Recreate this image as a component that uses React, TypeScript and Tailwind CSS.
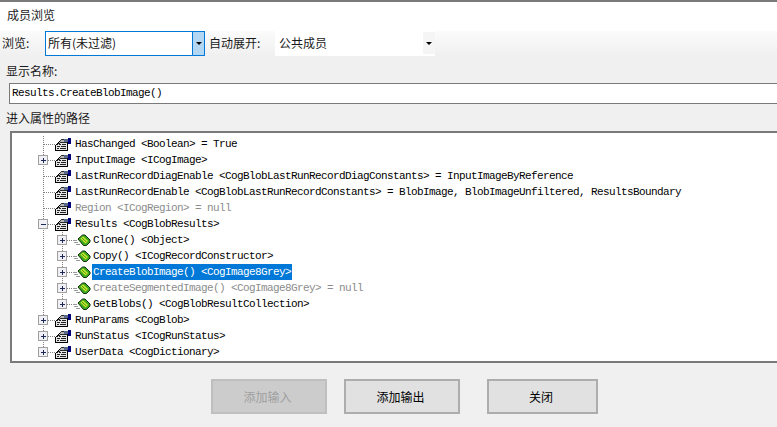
const CJK = "font-['Noto_Sans_CJK_SC','Liberation_Sans',sans-serif]";
const MONO = "font-['Liberation_Mono','Noto_Sans_CJK_SC',monospace]";

function Expander({ x, open }: { x: number; open: boolean }) {
  return (
    <g>
      <rect x={x - 4.5} y={3.5} width={9} height={9} fill="#f0f0f6" stroke="#a0a0a0" />
      <rect x={x - 2} y={8} width={5} height={1} fill="#1c2a5a" />
      {!open && <rect x={x} y={6} width={1} height={5} fill="#1c2a5a" />}
    </g>
  );
}

function Dots({ x, y0, y1 }: { x: number; y0: number; y1: number }) {
  const out = [];
  for (let y = y0; y < y1; y += 2) out.push(<rect key={y} x={x} y={y} width={1} height={1} fill="#808080" />);
  return <>{out}</>;
}

function HDots({ x0, x1 }: { x0: number; x1: number }) {
  const out = [];
  for (let x = x0; x < x1; x += 2) out.push(<rect key={x} x={x} y={8} width={1} height={1} fill="#808080" />);
  return <>{out}</>;
}

function PropIcon({ x }: { x: number }) {
  return (
    <g transform={`translate(${x - 1} 2)`}>
      <path d="M1.5 12.5 V7.5 L5.5 3.5 H13.5 V12.5 Z" fill="#e6e6e6" stroke="#000" />
      <path d="M3 6.5 H4 M5 6.5 H7 M8 6.5 H12 M3 8.5 H6 M7 8.5 H12 M3 10.5 H5 M6 10.5 H12" stroke="#222" fill="none" />
      <path d="M4 5 L8 1 H14 L13 4 H7 L5 6 Z" fill="#b8b8b8" stroke="#000" strokeWidth="0.8" />
      <rect x={10} y={1} width={4} height={3} fill="#5a6a8c" />
      <rect x={14} y={0} width={3} height={6} fill="#00007c" />
    </g>
  );
}

function MethodIcon({ x }: { x: number }) {
  return (
    <g transform={`translate(${x} 2)`}>
      <path d="M0 6.5 H4 M1 8.5 H5 M3 10.5 H7" stroke="#9a9a9a" fill="none" />
      <path
        d="M5 5 L9.5 1 H12 L17 6 V8 L13.5 11.5 H10.5 Z"
        fill="#3fa81e"
        stroke="#0f2f0c"
        shapeRendering="geometricPrecision"
      />
      <path d="M7.5 4.5 L10 2.5 L15 7 L12.5 9.5 Z" fill="#d3ec2e" shapeRendering="geometricPrecision" />
      <path d="M9 4 L13.5 8" stroke="#2f8f18" fill="none" shapeRendering="geometricPrecision" />
    </g>
  );
}

type RowData = {
  level: 0 | 1;
  label: string;
  exp?: "plus" | "minus";
  dim?: boolean;
  sel?: boolean;
  last?: boolean;
  lastChild?: boolean;
};

const rows: RowData[] = [
  { level: 0, label: "HasChanged <Boolean> = True" },
  { level: 0, label: "InputImage <ICogImage>", exp: "plus" },
  { level: 0, label: "LastRunRecordDiagEnable <CogBlobLastRunRecordDiagConstants> = InputImageByReference" },
  { level: 0, label: "LastRunRecordEnable <CogBlobLastRunRecordConstants> = BlobImage, BlobImageUnfiltered, ResultsBoundary" },
  { level: 0, label: "Region <ICogRegion> = null", dim: true },
  { level: 0, label: "Results <CogBlobResults>", exp: "minus" },
  { level: 1, label: "Clone() <Object>", exp: "plus" },
  { level: 1, label: "Copy() <ICogRecordConstructor>", exp: "plus" },
  { level: 1, label: "CreateBlobImage() <CogImage8Grey>", exp: "plus", sel: true },
  { level: 1, label: "CreateSegmentedImage() <CogImage8Grey> = null", exp: "plus", dim: true },
  { level: 1, label: "GetBlobs() <CogBlobResultCollection>", exp: "plus", lastChild: true },
  { level: 0, label: "RunParams <CogBlob>", exp: "plus" },
  { level: 0, label: "RunStatus <ICogRunStatus>", exp: "plus" },
  { level: 0, label: "UserData <CogDictionary>", exp: "plus", last: true },
];

function TreeRow({ r, showChildLine }: { r: RowData; showChildLine: boolean }) {
  const w = r.level === 0 ? 61 : 80;
  const cx0 = 31;
  const cx1 = 50;
  return (
    <div className="flex h-4 items-center">
      <svg width={w} height={16} shapeRendering="crispEdges" className="shrink-0">
        <Dots x={cx0} y0={0} y1={r.last ? 8 : 16} />
        {showChildLine && <Dots x={cx1} y0={0} y1={r.lastChild ? 8 : 16} />}
        {r.level === 0 ? <HDots x0={cx0 + 1} x1={43} /> : <HDots x0={cx1 + 1} x1={61} />}
        {r.exp && <Expander x={r.level === 0 ? cx0 : cx1} open={r.exp === "minus"} />}
        {r.level === 0 ? <PropIcon x={43} /> : <MethodIcon x={61} />}
      </svg>
      <span
        className={`${MONO} whitespace-pre px-px text-[11px] leading-4 tracking-[-0.6px] ${
          r.sel ? "bg-[#0078d7] text-white" : r.dim ? "text-[#8c8c8c]" : "text-black"
        } ${r.level === 0 ? "ml-[1px]" : "ml-0"}`}
      >
        {r.label}
      </span>
    </div>
  );
}

function Btn({ children, disabled, w }: { children: string; disabled?: boolean; w: string }) {
  return (
    <div
      className={`${w} ${CJK} flex h-[35px] items-center justify-center border-2 pr-[3px] text-[12px] ${
        disabled ? "border-[#bfbfbf] bg-[#cccccc] text-[#a0a0a0]" : "border-[#adadad] bg-[#e1e1e1] text-black"
      }`}
    >
      {children}
    </div>
  );
}

export default function App() {
  return (
    <div className={`${CJK} h-[427px] w-[777px] overflow-hidden border-t-2 border-[#7a7a7a] bg-[#f0f0f0] text-[12px] text-[#1a1a1a]`}>
      <div className="flex h-[29px] items-center bg-white pb-[3px] pl-[7px]">成员浏览</div>
      <div className="flex h-[25px] items-center bg-gradient-to-b from-[#fbfbfb] to-[#f0f0f0] pl-[2px]">
        <span className="w-[43px] pb-[2px]">浏览:</span>
        <div className="flex h-[25px] w-[160px] border border-[#0078d7] bg-white">
          <span className="flex-1 pl-[2px] leading-[22px] text-[#111]">所有(未过滤)</span>
          <div className="flex w-[12px] items-center justify-center border-l border-[#0078d7] bg-[#b3d7f3]">
            <div className="h-0 w-0 border-x-[3px] border-t-[3px] border-x-transparent border-t-black" />
          </div>
        </div>
        <span className="ml-[4px] w-[66px] pb-[2px]">自动展开:</span>
        <div className="flex h-[25px] w-[160px] items-center bg-white pb-[1px] pl-[4px]">
          <span className="flex-1">公共成员</span>
          <div className="flex h-[22px] w-[12px] items-center justify-center bg-[#f5f5f5]">
            <div className="h-0 w-0 border-x-[3px] border-t-[3px] border-x-transparent border-t-black" />
          </div>
        </div>
      </div>
      <div className="flex h-[27px] items-end pb-[3px] pl-[6px]">显示名称:</div>
      <div className={`${MONO} ml-[9px] h-[21px] border-y border-l border-[#7a7a7a] bg-white pl-[2px] text-[11px] leading-[19px] tracking-[-0.6px] text-black`}>
        Results.CreateBlobImage()
      </div>
      <div className="flex h-[27px] items-center pl-[6px]">进入属性的路径</div>
      <div className="ml-[10px] h-[232px] overflow-hidden border-2 border-r-0 border-[#7a7a7a] bg-white pt-[3px]">
        {rows.map((r, i) => (
          <TreeRow key={r.label} r={r} showChildLine={i >= 6 && i <= 10} />
        ))}
      </div>
      <div className="flex pt-[16px] pl-[211px]">
        <Btn disabled w="w-[116px]">添加输入</Btn>
        <div className="w-[17px]" />
        <Btn w="w-[116px]">添加输出</Btn>
        <div className="w-[27px]" />
        <Btn w="w-[111px]">关闭</Btn>
      </div>
    </div>
  );
}
